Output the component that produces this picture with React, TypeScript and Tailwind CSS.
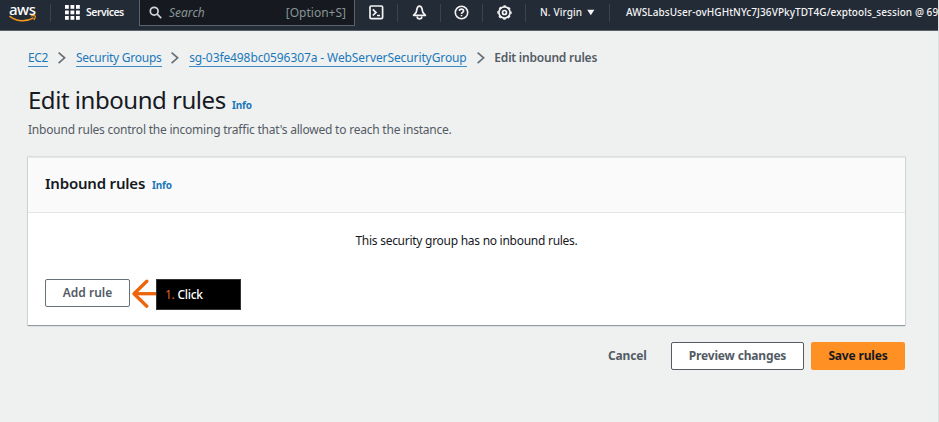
import type { ReactNode } from "react";

function Divider({ className }: { className: string }) {
  return <span className={`h-[18px] w-px shrink-0 bg-[#3a434e] ${className}`} />;
}

function Chevron() {
  return (
    <svg className="mx-[8.8px] h-3 w-[10px] shrink-0" viewBox="0 0 10 12" fill="none" stroke="#687078" strokeWidth="1.7">
      <path d="M1.6 0.6 7.6 5.8 1.6 11.2" />
    </svg>
  );
}

function Crumb({ className, children }: { className: string; children: ReactNode }) {
  return (
    <a className={`flex h-[18px] shrink-0 items-center border-b border-[#3b8cc5] text-[#1a78ba] ${className}`}>
      {children}
    </a>
  );
}

function AwsLogo() {
  return (
    <div className="ml-[9px] w-[28px] shrink-0">
      <span className="-mt-px block h-[20px] text-[15px] leading-[20px] font-medium tracking-[-0.5px] text-white">aws</span>
      <svg className="-mt-[4px] h-[8px] w-[28px]" viewBox="0 0 28 8" fill="none" stroke="#f7981f" strokeWidth="1.5">
        <path d="M0.5 1.2C7 6.6 17 7.2 24.5 2.8" />
        <path d="M21.8 0.9C24 0.4 26.2 0.5 26.3 1.2 26.4 2 25.8 3.8 24.8 5" strokeWidth="1.2" />
      </svg>
    </div>
  );
}

function TopBar() {
  return (
    <header className="flex h-[31px] items-start overflow-hidden border-b border-[#59616b] bg-[#232b37] text-[#f4f4f4]">
      <AwsLogo />
      <Divider className="mt-[4px] ml-[13px]" />
      <svg className="mt-[5px] ml-[14px] h-[15px] w-[15px] shrink-0" viewBox="0 0 15 15" fill="#fff">
        {[0, 5.5, 11].map((y) => [0, 5.5, 11].map((x) => <rect key={`${x}-${y}`} x={x} y={y} width="3.8" height="3.8" />))}
      </svg>
      <span className="ml-[6px] flex h-[25px] w-[53px] shrink-0 items-center text-[10.5px] font-semibold tracking-[-0.5px]">Services</span>
      <div className="flex h-[26px] w-[216px] shrink-0 items-center border border-t-0 border-[#5c6269] bg-[#16191f] pr-[8px] pl-[9px] text-[12px] text-[#879596]">
        <svg className="h-[13px] w-[13px]" viewBox="0 0 13 13" fill="none" stroke="#d0d5d8" strokeWidth="1.7">
          <circle cx="5.2" cy="5.2" r="3.9" />
          <path d="m8.2 8.2 4 4" />
        </svg>
        <span className="ml-[7px] italic">Search</span>
        <span className="ml-auto">[Option+S]</span>
      </div>
      <svg className="mt-[5px] ml-[14px] h-[15px] w-[15px] shrink-0" viewBox="0 0 15 15" fill="none" stroke="#f4f4f4" strokeWidth="1.7">
        <rect x="1" y="1" width="12.6" height="12.6" rx="1.2" />
        <path d="m3.8 4.3 3.2 3.1-3.2 3.1M8 10.5h3" />
      </svg>
      <Divider className="mt-[4px] ml-[13px]" />
      <svg className="mt-[5px] ml-[14px] h-[15px] w-[15px] shrink-0" viewBox="0 0 15 15" fill="none" stroke="#f4f4f4" strokeWidth="1.7" strokeLinejoin="round">
        <path d="M1.6 10.3 4.2 7.4 5 3.8C5.4 2.2 6.4 1.1 7.5 1.1S9.6 2.2 10 3.8L10.8 7.4 13.4 10.3Z" />
        <path d="M5 11.5 5.6 13.3Q7.5 14.4 9.4 13.3L10 11.5" />
      </svg>
      <Divider className="mt-[4px] ml-[13px]" />
      <svg className="mt-[5px] ml-[13px] h-[15px] w-[15px] shrink-0" viewBox="0 0 15 15" fill="none" stroke="#f4f4f4" strokeWidth="1.6">
        <circle cx="7.5" cy="7.5" r="6.2" />
        <path d="M5.4 6.1C5.4 4.8 6.3 4.1 7.5 4.1S9.6 4.8 9.6 5.9C9.6 7.3 7.5 7.2 7.5 9M7.5 9.9v1.4" />
      </svg>
      <Divider className="mt-[4px] ml-[13px]" />
      <svg className="mt-[5px] ml-[14px] h-[15px] w-[15px] shrink-0" viewBox="0 0 15 15" fill="none" stroke="#f4f4f4">
        <circle cx="7.5" cy="7.5" r="5.6" strokeWidth="1.7" />
        <circle cx="7.5" cy="7.5" r="6.6" strokeWidth="1.2" strokeDasharray="2.6 2.584" strokeDashoffset="1.3" />
        <circle cx="7.5" cy="7.5" r="2" strokeWidth="1.7" />
      </svg>
      <Divider className="mt-[4px] ml-[13px]" />
      <span className="ml-[14px] flex h-[25px] w-[47px] shrink-0 items-center text-[10px] font-medium tracking-[0.1px]">N. Virgin</span>
      <svg className="mt-[9px] h-[7px] w-[8px] shrink-0" viewBox="0 0 8 7" fill="#f4f4f4">
        <path d="M0.2 0.8h7.2L3.8 6.2Z" />
      </svg>
      <Divider className="mt-[4px] ml-[14px]" />
      <span className="ml-[16px] flex h-[25px] shrink-0 items-center text-[10px] font-medium tracking-[0.07px]">
        AWSLabsUser-ovHGHtNYc7J36VPkyTDT4G/exptools_session @ 69
      </span>
    </header>
  );
}

export default function App() {
  return (
    <div className="h-[422px] w-[939px] overflow-hidden border-r border-[#dcdfdf] bg-[#eff1f1] font-['Noto_Sans',sans-serif] whitespace-nowrap text-[#16191f]">
      <TopBar />
      <main className="pr-[33px] pl-[28px]">
        <nav className="mt-[18px] flex h-[18px] items-center text-[12px]">
          <Crumb className="w-[20.3px] tracking-[-0.4px]">EC2</Crumb>
          <Chevron />
          <Crumb className="w-[85.7px] tracking-[-0.25px]">Security Groups</Crumb>
          <Chevron />
          <Crumb className="w-[277.6px] tracking-[-0.1px]">sg-03fe498bc0596307a - WebServerSecurityGroup</Crumb>
          <Chevron />
          <span className="font-semibold tracking-[-0.22px] text-[#545b64]">Edit inbound rules</span>
        </nav>
        <div className="mt-[15px] flex h-[36px] items-baseline">
          <h1 className="w-[204px] text-[24px] leading-[36px] tracking-[-0.47px]">Edit inbound rules</h1>
          <a className="text-[10px] font-bold tracking-[-0.2px] text-[#1a78ba]">Info</a>
        </div>
        <p className="mt-[2px] h-[20px] text-[12px] leading-[20px] tracking-[-0.22px] text-[#545b64]">
          Inbound rules control the incoming traffic that's allowed to reach the instance.
        </p>
        <section className="mt-[17px] flex h-[168px] flex-col border-t border-[#e4e7e7] bg-white shadow-[0_1px_1px_0_rgba(0,28,36,0.35),0_0_1px_1px_rgba(0,28,36,0.08)]">
          <div className="flex h-[55px] items-baseline border-b border-[#e4e7e7] bg-[#fafafa] pl-[17px]">
            <h2 className="w-[107px] text-[15px] leading-[51px] font-semibold tracking-[-0.2px]">Inbound rules</h2>
            <a className="text-[10px] font-bold tracking-[-0.2px] text-[#1a78ba]">Info</a>
          </div>
          <p className="mt-[18px] h-[20px] text-center text-[12px] leading-[20px] tracking-[-0.27px]">This security group has no inbound rules.</p>
          <div className="mt-[28px] flex items-start pl-[17px]">
            <button className="flex h-[28px] w-[85px] items-center justify-center rounded-[2px] border border-[#687078] text-[12px] font-semibold tracking-[0px] text-[#545b64]">
              Add rule
            </button>
            <svg className="ml-[2px] h-[29px] w-[24px] shrink-0" viewBox="0 0 24 29" fill="none" stroke="#ec650d" strokeWidth="3.3" strokeLinecap="round" strokeLinejoin="round">
              <path d="M24 14.7H2" strokeLinecap="butt" />
              <path d="M14.8 2.2 2 14.7 14.8 27.2" />
            </svg>
            <div className="flex h-[31px] w-[85px] items-center border border-[#333] bg-black pl-[8px] text-[12px] tracking-[-0.3px] text-white">
              <span className="mr-[3px] text-[#e0601a]">1.</span>
              <span className="font-medium">Click</span>
            </div>
          </div>
        </section>
        <div className="mt-[17px] flex h-[28px] items-center text-[12px] font-bold tracking-[-0.17px] text-[#545b64]">
          <button className="ml-[580px] w-[39px] shrink-0 text-left">Cancel</button>
          <button className="ml-[24px] h-[28px] w-[133px] shrink-0 rounded-[2px] border border-[#545b64] bg-white">Preview changes</button>
          <button className="ml-[7px] h-[28px] w-[94px] shrink-0 rounded-[2px] bg-[#ff9024] text-[#16191f]">Save rules</button>
        </div>
      </main>
    </div>
  );
}
